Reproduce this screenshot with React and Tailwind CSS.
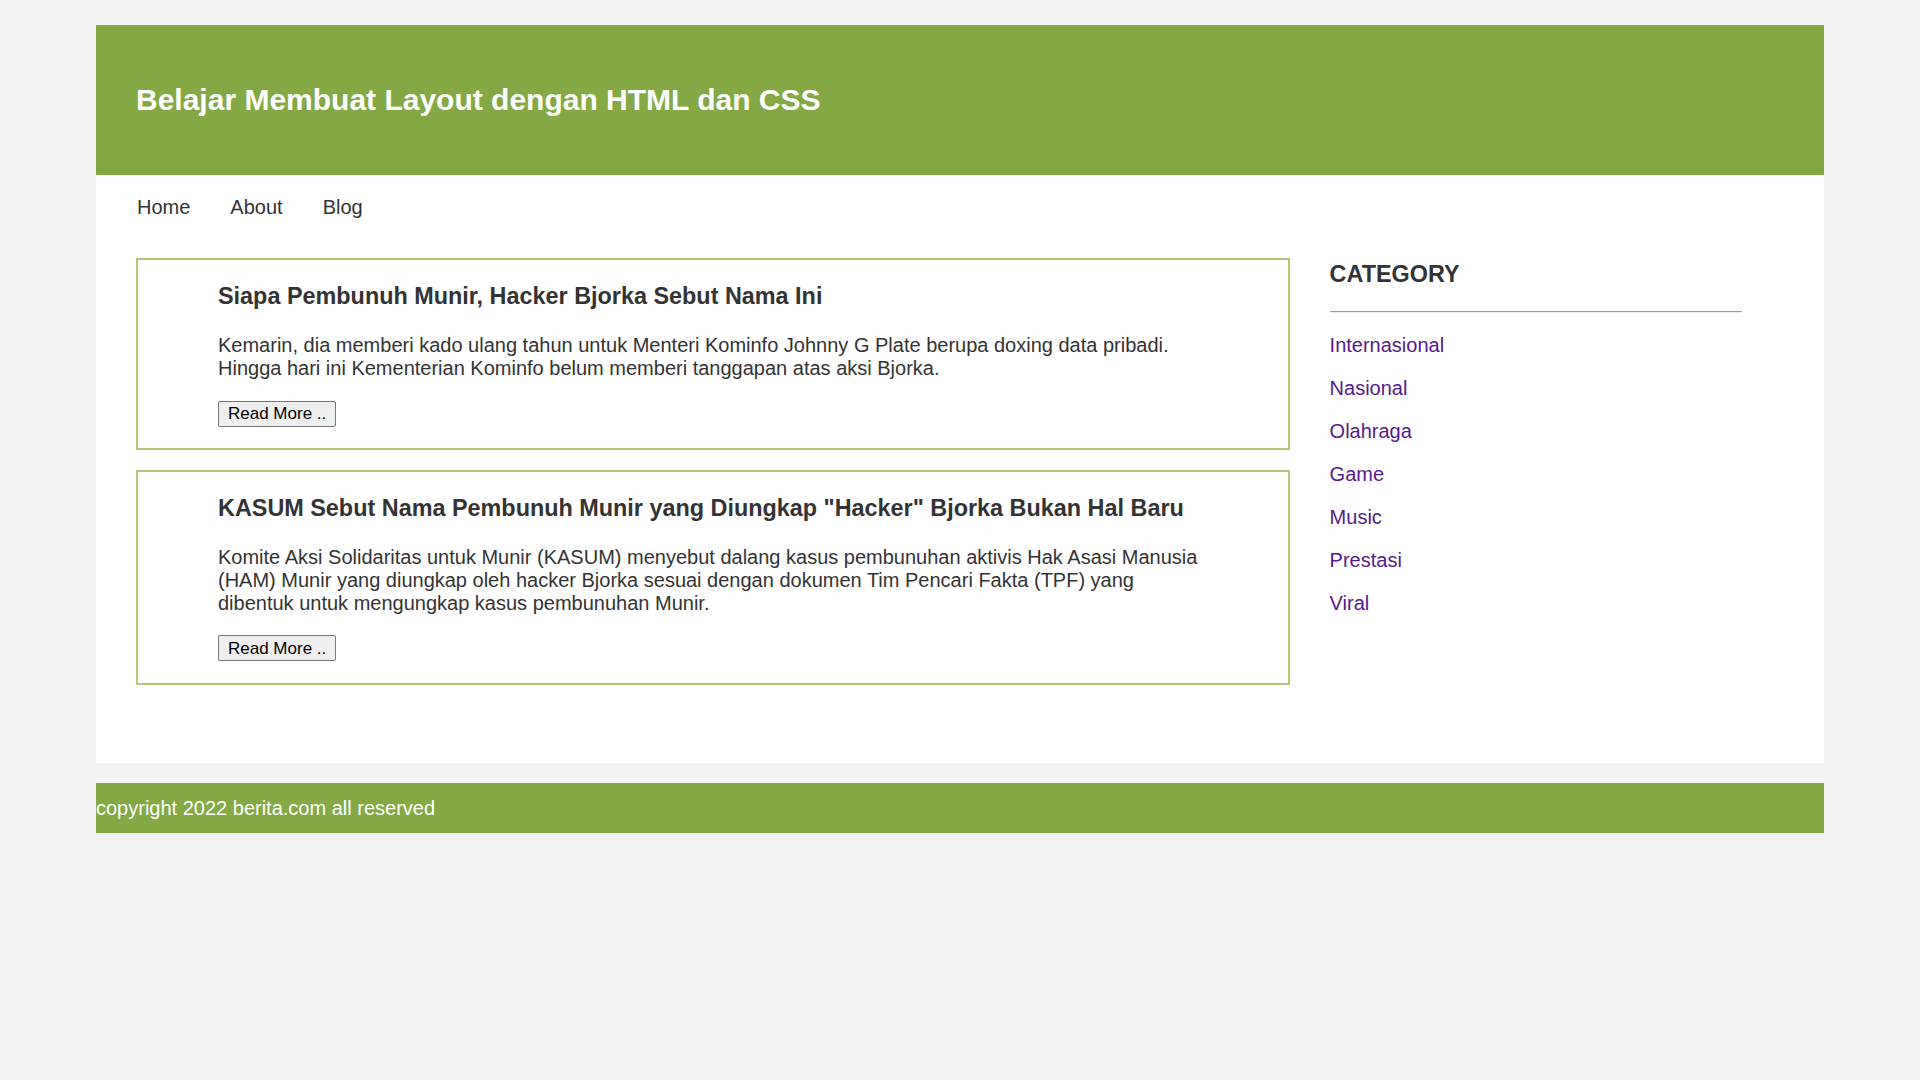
import React from "react";

const articles = [
  {
    title: "Siapa Pembunuh Munir, Hacker Bjorka Sebut Nama Ini",
    body: "Kemarin, dia memberi kado ulang tahun untuk Menteri Kominfo Johnny G Plate berupa doxing data pribadi. Hingga hari ini Kementerian Kominfo belum memberi tanggapan atas aksi Bjorka.",
  },
  {
    title: 'KASUM Sebut Nama Pembunuh Munir yang Diungkap "Hacker" Bjorka Bukan Hal Baru',
    body: "Komite Aksi Solidaritas untuk Munir (KASUM) menyebut dalang kasus pembunuhan aktivis Hak Asasi Manusia (HAM) Munir yang diungkap oleh hacker Bjorka sesuai dengan dokumen Tim Pencari Fakta (TPF) yang dibentuk untuk mengungkap kasus pembunuhan Munir.",
  },
];

const categories = ["Internasional", "Nasional", "Olahraga", "Game", "Music", "Prestasi", "Viral"];

function App() {
  return (
    <div className="min-h-screen bg-[#f2f2f2] pt-[25px] font-['Liberation_Sans',Arial,sans-serif] text-[20px] text-[#333]">
      <div className="w-[1728px] mx-auto">
        {/* Header */}
        <header className="h-[150px] bg-[#84a843] px-10 flex items-center">
          <h2 className="text-[30px] font-bold text-white leading-[1.15]">
            Belajar Membuat Layout dengan HTML dan CSS
          </h2>
        </header>

        {/* Content */}
        <div className="bg-white px-10 pt-[21px] pb-[78px]">
          <nav className="flex gap-10 pl-px leading-[23px]">
            <a href="#" className="text-[#333]">Home</a>
            <a href="#" className="text-[#333]">About</a>
            <a href="#" className="text-[#333]">Blog</a>
          </nav>

          <div className="flex gap-10 mt-[39px]">
            <main className="w-[70%] flex flex-col gap-5">
              {articles.map((a) => (
                <article key={a.title} className="border-2 border-[#b5c773] pt-[23px] pb-[21px] px-[80px]">
                  <h3 className="text-[23.4px] font-bold leading-[1.15]">{a.title}</h3>
                  <p className="mt-[24px] leading-[22.8px]">{a.body}</p>
                  <button className="mt-[21px] h-[26px] px-[9px] text-[17px] text-black bg-[#efefef] border border-[#767676] rounded-[2px] leading-none">
                    Read More ..
                  </button>
                </article>
              ))}
            </main>

            <aside className="w-[25%] pt-[3px]">
              <h3 className="text-[23.4px] font-bold leading-[1.15]">CATEGORY</h3>
              <div className="mt-[23px] border-t border-t-[#9a9a9a] border-b border-b-[#eeeeee]" />
              <ul className="mt-[11px]">
                {categories.map((c) => (
                  <li key={c} className="leading-[43px]">
                    <a href="#" className="text-[#551a8b]">{c}</a>
                  </li>
                ))}
              </ul>
            </aside>
          </div>
        </div>

        {/* Footer */}
        <footer className="mt-5 h-[50px] bg-[#84a843] flex items-center text-white">
          copyright 2022 berita.com all reserved
        </footer>
      </div>
    </div>
  );
}

export default App;
